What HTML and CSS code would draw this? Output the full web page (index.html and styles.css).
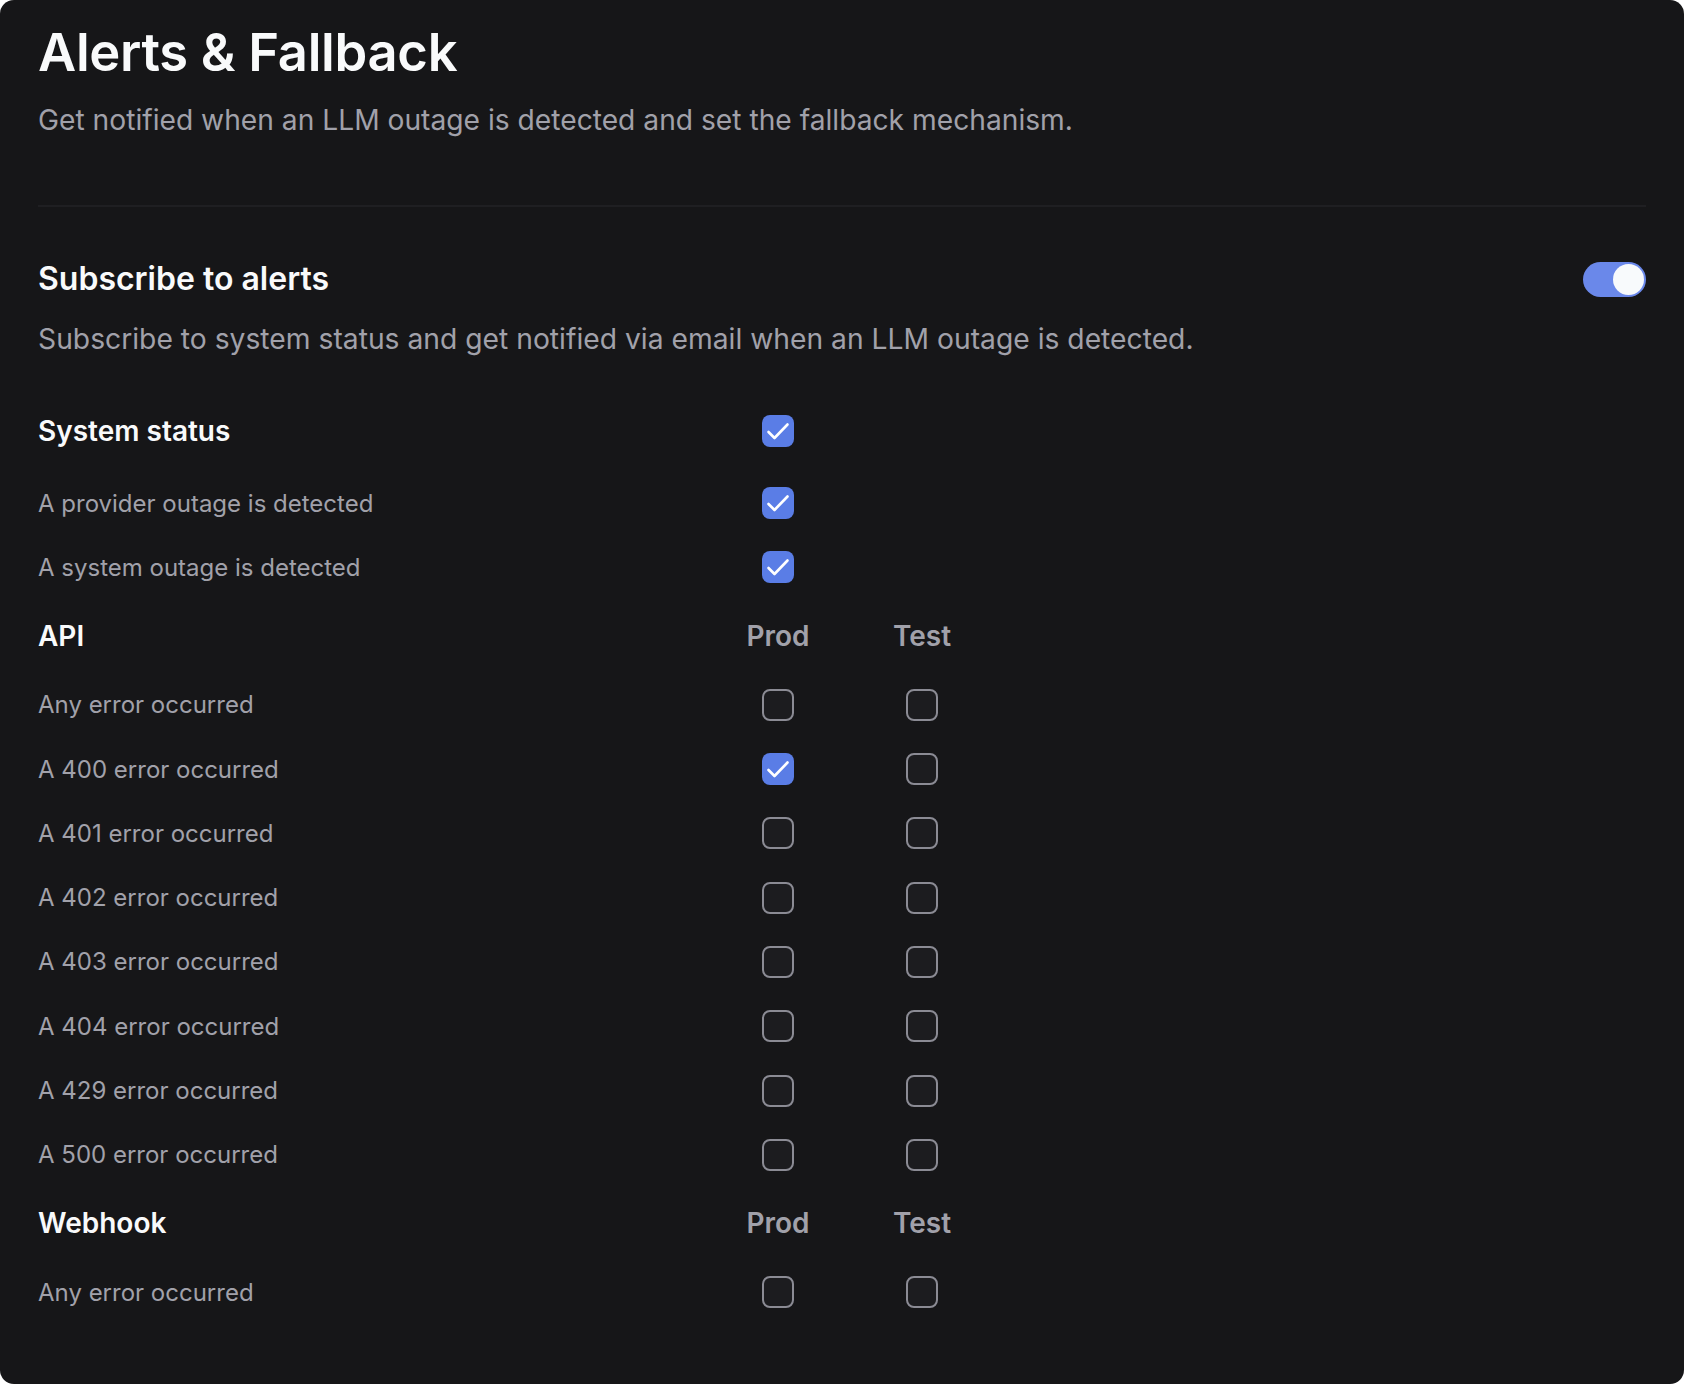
FILE: index.html
```html
<!DOCTYPE html>
<html lang="en">
<head>
<meta charset="utf-8">
<title>Alerts &amp; Fallback</title>
<link rel="stylesheet" href="styles.css">
</head>
<body>
<main class="card">
  <header class="page-head">
    <h1 class="title">Alerts &amp; Fallback</h1>
    <p class="subtitle">Get notified when an LLM outage is detected and set the fallback mechanism.</p>
  </header>
  <hr class="divider">
  <section class="section">
    <div class="section-head">
      <h2 class="section-title">Subscribe to alerts</h2>
      <span class="toggle on"><span class="knob"></span></span>
    </div>
    <p class="section-desc">Subscribe to system status and get notified via email when an LLM outage is detected.</p>

    <div class="group group-first">
      <div class="row head head-ss">
        <span class="group-title">System status</span>
        <span class="cell"><span class="cb checked"><svg viewBox="0 0 32 32"><path d="M6.5 17 L12.5 23 L25.5 9.5"/></svg></span></span>
      </div>
      <div class="row">
        <span class="label">A provider outage is detected</span>
        <span class="cell"><span class="cb checked"><svg viewBox="0 0 32 32"><path d="M6.5 17 L12.5 23 L25.5 9.5"/></svg></span></span>
      </div>
      <div class="row">
        <span class="label">A system outage is detected</span>
        <span class="cell"><span class="cb checked"><svg viewBox="0 0 32 32"><path d="M6.5 17 L12.5 23 L25.5 9.5"/></svg></span></span>
      </div>
    </div>

    <div class="group">
      <div class="row head">
        <span class="group-title">API</span>
        <span class="cell col-title">Prod</span>
        <span class="cell col-title">Test</span>
      </div>
      <div class="row">
        <span class="label">Any error occurred</span>
        <span class="cell"><span class="cb"></span></span>
        <span class="cell"><span class="cb"></span></span>
      </div>
      <div class="row">
        <span class="label">A 400 error occurred</span>
        <span class="cell"><span class="cb checked"><svg viewBox="0 0 32 32"><path d="M6.5 17 L12.5 23 L25.5 9.5"/></svg></span></span>
        <span class="cell"><span class="cb"></span></span>
      </div>
      <div class="row">
        <span class="label">A 401 error occurred</span>
        <span class="cell"><span class="cb"></span></span>
        <span class="cell"><span class="cb"></span></span>
      </div>
      <div class="row">
        <span class="label">A 402 error occurred</span>
        <span class="cell"><span class="cb"></span></span>
        <span class="cell"><span class="cb"></span></span>
      </div>
      <div class="row">
        <span class="label">A 403 error occurred</span>
        <span class="cell"><span class="cb"></span></span>
        <span class="cell"><span class="cb"></span></span>
      </div>
      <div class="row">
        <span class="label">A 404 error occurred</span>
        <span class="cell"><span class="cb"></span></span>
        <span class="cell"><span class="cb"></span></span>
      </div>
      <div class="row">
        <span class="label">A 429 error occurred</span>
        <span class="cell"><span class="cb"></span></span>
        <span class="cell"><span class="cb"></span></span>
      </div>
      <div class="row">
        <span class="label">A 500 error occurred</span>
        <span class="cell"><span class="cb"></span></span>
        <span class="cell"><span class="cb"></span></span>
      </div>
    </div>

    <div class="group">
      <div class="row head">
        <span class="group-title">Webhook</span>
        <span class="cell col-title">Prod</span>
        <span class="cell col-title">Test</span>
      </div>
      <div class="row">
        <span class="label">Any error occurred</span>
        <span class="cell"><span class="cb"></span></span>
        <span class="cell"><span class="cb"></span></span>
      </div>
    </div>
  </section>
</main>
</body>
</html>
```

FILE: styles.css
```css
html, body {
  margin: 0;
  padding: 0;
  background: #ffffff;
}

body {
  font-family: Inter, "Noto Sans", sans-serif;
  color: #f9fafb;
}

.card {
  box-sizing: border-box;
  width: 1684px;
  height: 1384px;
  background: #161618;
  border-radius: 14px;
  padding: 20px 38px 0 38px;
  overflow: hidden;
}

.title {
  margin: 0;
  font-size: 52.5px;
  line-height: 64px;
  font-weight: 600;
  color: #f9fafb;
  letter-spacing: -0.3px;
}

.subtitle {
  margin: 16px 0 0 0;
  font-size: 28.2px;
  line-height: 40px;
  font-weight: 400;
  color: #a1a1aa;
}

.divider {
  margin: 65px 0 0 0;
  border: 0;
  height: 2px;
  background: #1f1f22;
}

.section {
  margin-top: 50px;
}

.section-head {
  display: flex;
  align-items: center;
  justify-content: space-between;
  height: 44px;
}

.section-title {
  margin: 0;
  font-size: 32px;
  line-height: 44px;
  font-weight: 600;
  color: #f9fafb;
}

.toggle {
  box-sizing: border-box;
  width: 63px;
  height: 35px;
  border-radius: 18px;
  background: #6a88ea;
  padding: 2px;
  display: flex;
  justify-content: flex-end;
  align-items: center;
}

.knob {
  width: 31px;
  height: 31px;
  border-radius: 50%;
  background: #f8fafc;
}

.section-desc {
  margin: 18px 0 0 0;
  font-size: 28.25px;
  line-height: 40px;
  color: #a1a1aa;
}

.group-first {
  margin-top: 32px;
}

.row {
  display: grid;
  grid-template-columns: 668px 144px 144px;
  align-items: center;
  height: 64.3px;
}

.row.head {
  height: 73px;
}

.row.head-ss {
  height: 80px;
}

.group-title {
  font-size: 28px;
  font-weight: 600;
  color: #f9fafb;
}

.label {
  font-size: 24px;
  font-weight: 400;
  color: #a1a1aa;
}

.cell {
  display: flex;
  justify-content: center;
  align-items: center;
}

.col-title {
  font-size: 28px;
  font-weight: 600;
  color: #a1a1aa;
}

.cb {
  box-sizing: border-box;
  width: 32px;
  height: 32px;
  border-radius: 8px;
  border: 2px solid #8b8b94;
  background: #1c1c1f;
  display: flex;
  align-items: center;
  justify-content: center;
}

.cb.checked {
  border: 0;
  background: #5a7de6;
}

.cb svg {
  width: 32px;
  height: 32px;
  display: block;
}

.cb svg path {
  fill: none;
  stroke: #ffffff;
  stroke-width: 2.6;
  stroke-linecap: round;
  stroke-linejoin: round;
}
```
